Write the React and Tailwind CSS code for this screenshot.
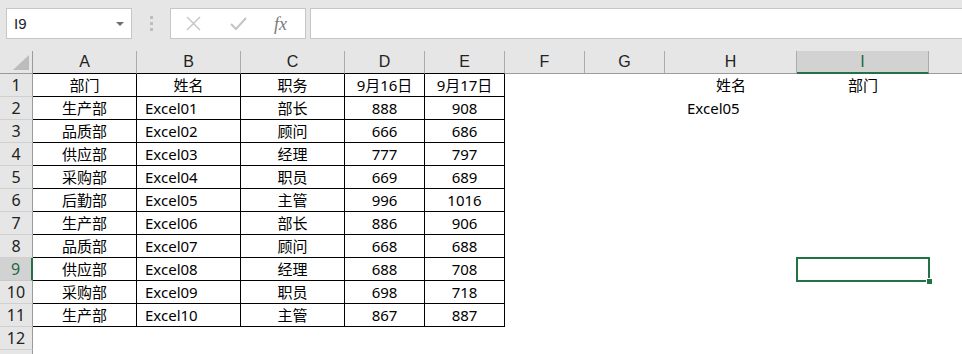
import React from 'react'

const COLS = ['A', 'B', 'C', 'D', 'E', 'F', 'G', 'H', 'I']

const HEAD = ['部门', '姓名', '职务', '9月16日', '9月17日']

const ROWS = [
  ['生产部', 'Excel01', '部长', '888', '908'],
  ['品质部', 'Excel02', '顾问', '666', '686'],
  ['供应部', 'Excel03', '经理', '777', '797'],
  ['采购部', 'Excel04', '职员', '669', '689'],
  ['后勤部', 'Excel05', '主管', '996', '1016'],
  ['生产部', 'Excel06', '部长', '886', '906'],
  ['品质部', 'Excel07', '顾问', '668', '688'],
  ['供应部', 'Excel08', '经理', '688', '708'],
  ['采购部', 'Excel09', '职员', '698', '718'],
  ['生产部', 'Excel10', '主管', '867', '887'],
]

const GRID = 'grid grid-cols-[33px_104px_104px_104px_80px_80px_80px_80px_132px_132px_1fr]'
const FONT = { fontFamily: '"Noto Sans", "Noto Sans CJK SC", sans-serif' }
const LETTER = { fontFamily: '"Liberation Sans", Arial, sans-serif' }

function RowHead({ n, active }){
  return (
    <div className={active
      ? 'h-[23px] flex items-center justify-center bg-[#d2d2d2] border-b border-[#c8c8c8] border-r-2 border-r-[#217346] text-[16px] leading-none text-[#1e6a40]'
      : 'h-[23px] flex items-center justify-center bg-[#e6e6e6] border-b border-[#d0d0d0] border-r border-r-[#9b9b9b] text-[16px] leading-none text-[#222]'}>
      {n}
    </div>
  )
}

function Cell({ children, align = 'center', boxed }){
  const a = align === 'left' ? 'justify-start pl-2' : 'justify-center'
  return (
    <div className={'h-[23px] flex items-center text-[15px] leading-none text-black bg-white ' + a + (boxed ? ' border-r border-b border-black' : '')}>
      {children}
    </div>
  )
}

export default function App(){
  return (
    <div className="w-[962px] h-[354px] overflow-hidden bg-[#e6e6e6]" style={FONT}>
      {/* formula bar */}
      <div className="h-[51px] pt-2 pl-[6px] flex items-start">
        <div className="w-[126px] h-[31px] bg-white border border-[#c6c6c6] flex items-center justify-between pl-[7px] pr-[7px]">
          <span className="text-[15px] leading-none text-[#222]" style={LETTER}>I9</span>
          <span className="w-0 h-0 border-l-[4px] border-r-[4px] border-t-[4px] border-l-transparent border-r-transparent border-t-[#6f6f6f]" />
        </div>
        <div className="w-[38px] h-[31px] flex flex-col items-center justify-center gap-[3px]">
          <span className="w-[3px] h-[3px] bg-[#bdbdbd]" />
          <span className="w-[3px] h-[3px] bg-[#bdbdbd]" />
          <span className="w-[3px] h-[3px] bg-[#bdbdbd]" />
        </div>
        <div className="w-[136px] h-[31px] bg-white border border-[#c6c6c6] flex items-center pl-[15px]">
          <svg width="15" height="15" viewBox="0 0 15 15" className="text-[#c4c4c4]">
            <path d="M1 1L14 14M14 1L1 14" stroke="currentColor" strokeWidth="1.4" fill="none" />
          </svg>
          <svg width="17" height="15" viewBox="0 0 17 15" className="ml-[29px] text-[#c4c4c4]">
            <path d="M1 8L6 13L16 2" stroke="currentColor" strokeWidth="2" fill="none" />
          </svg>
          <span className="ml-[27px] text-[18px] leading-none italic text-[#7a7a7a]" style={{ fontFamily: '"Liberation Serif", serif' }}>fx</span>
        </div>
        <div className="ml-1 flex-1 h-[31px] bg-white border-y border-l border-[#c6c6c6]" />
      </div>

      {/* column headers */}
      <div className={GRID + ' h-[23px]'}>
        <div className="relative border-r border-b border-[#9b9b9b]">
          <svg width="16" height="15" viewBox="0 0 16 15" className="absolute right-[3px] bottom-[3px]">
            <path d="M16 0L16 15L0 15Z" fill="#bcbcbc" />
          </svg>
        </div>
        {COLS.map(c => (
          <div key={c} style={LETTER} className={c === 'I'
            ? 'flex items-center justify-center bg-[#d2d2d2] border-r border-r-[#ababab] border-b-2 border-b-[#217346] text-[16px] leading-none text-[#1e6a40]'
            : 'flex items-center justify-center border-r border-r-[#ababab] border-b ' + (['A', 'B', 'C', 'D', 'E'].includes(c) ? 'border-b-black' : 'border-b-[#9b9b9b]') + ' text-[16px] leading-none text-[#222]'}>
            {c}
          </div>
        ))}
        <div className="border-b border-[#9b9b9b]" />
      </div>

      {/* row 1 */}
      <div className={GRID}>
        <RowHead n={1} />
        {HEAD.map((h, i) => <Cell key={i} boxed>{h}</Cell>)}
        <Cell />
        <Cell />
        <Cell>姓名</Cell>
        <Cell>部门</Cell>
        <Cell />
      </div>

      {ROWS.map((r, idx) => {
        const n = idx + 2
        return (
          <div key={n} className={GRID}>
            <RowHead n={n} active={n === 9} />
            <Cell boxed>{r[0]}</Cell>
            <Cell boxed align="left">{r[1]}</Cell>
            <Cell boxed>{r[2]}</Cell>
            <Cell boxed>{r[3]}</Cell>
            <Cell boxed>{r[4]}</Cell>
            <Cell />
            <Cell />
            {n === 2
              ? <div className="h-[23px] flex items-center pl-[22px] text-[15px] leading-none bg-white">Excel05</div>
              : <Cell />}
            {n === 9
              ? (
                <div className="relative h-[23px] bg-white">
                  <div className="absolute -left-px -top-px -right-px -bottom-px border-2 border-[#217346]" />
                  <div className="absolute -right-[4px] -bottom-[4px] w-[7px] h-[7px] bg-[#217346] border border-white" />
                </div>
              )
              : <Cell />}
            <Cell />
          </div>
        )
      })}

      {/* row 12 and the top of row 13 */}
      <div className={GRID}>
        <RowHead n={12} />
        <div className="col-span-10 bg-white h-[23px]" />
      </div>
      <div className={GRID}>
        <div className="h-[23px] bg-[#e6e6e6] border-r border-[#9b9b9b]" />
        <div className="col-span-10 bg-white h-[23px]" />
      </div>
    </div>
  )
}
